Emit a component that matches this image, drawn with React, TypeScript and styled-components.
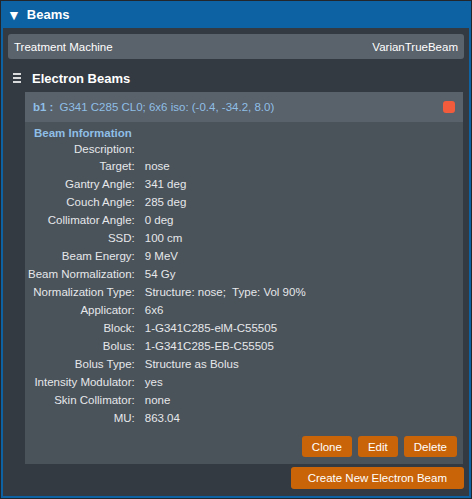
import { FC, Fragment } from 'react';
import styled, { createGlobalStyle } from 'styled-components';

const GlobalStyle = createGlobalStyle`
  body {
    margin: 0;
    background: #23272c;
    font-family: 'Liberation Sans', Arial, sans-serif;
    font-size: 11.5px;
  }
`;

const Panel = styled.div`
  box-sizing: border-box;
  width: 472px;
  height: 499px;
  border: 1px solid #23272c;
  display: flex;
  flex-direction: column;
`;

const PanelHeader = styled.div`
  display: flex;
  align-items: center;
  gap: 6px;
  height: 27px;
  padding-left: 6px;
  background-color: #0d62a3;
  color: #fff;
  font-size: 13px;
  font-weight: bold;
`;

const Caret = styled.span`
  font-size: 14px;
  line-height: 1;
`;

const PanelBody = styled.div`
  flex: 1;
  display: flex;
  flex-direction: column;
  background-color: #343a42;
  border: 2px solid #0d62a3;
  border-top: none;
  padding: 6px 5px 5px 5px;
`;

const MachineRow = styled.div`
  display: flex;
  justify-content: space-between;
  align-items: center;
  height: 25px;
  padding: 0 6px;
  border-radius: 3px;
  background-color: #5a626b;
  color: #fff;
`;

const SectionTitle = styled.div`
  display: flex;
  align-items: center;
  gap: 11px;
  height: 28px;
  padding: 5px 0 0 5px;
  color: #fff;
  font-size: 13px;
  font-weight: bold;
`;

const ListIcon = styled.span`
  display: flex;
  flex-direction: column;
  gap: 2px;
  width: 8px;

  i {
    display: block;
    height: 2px;
    background: #d8dadc;
  }
`;

const BeamCard = styled.div`
  margin-left: 17px;
  margin-right: 1px;
  display: flex;
  flex-direction: column;
`;

const CardHeader = styled.div`
  display: flex;
  align-items: center;
  justify-content: space-between;
  height: 30px;
  padding: 0 8px;
  background-color: #59616a;
  color: #8fbfe6;
`;

const BeamId = styled.span`
  font-weight: bold;
  margin-right: 6px;
`;

const StatusDot = styled.span`
  width: 12px;
  height: 12px;
  border-radius: 3px;
  background-color: #f25c3c;
`;

const CardBody = styled.div`
  background-color: #4a525a;
  padding: 3px 6px 7px 3px;
  display: flex;
  flex-direction: column;
`;

const InfoHeading = styled.div`
  margin-left: 6px;
  line-height: 16px;
  color: #8fbfe6;
  font-weight: bold;
`;

const InfoGrid = styled.div`
  display: grid;
  grid-template-columns: auto 1fr;
  column-gap: 10px;
  color: #e6e8ea;
`;

const Label = styled.div<{ $short?: boolean }>`
  text-align: right;
  line-height: ${(p) => (p.$short ? '16px' : '18px')};
  white-space: nowrap;
`;

const Value = styled.div<{ $short?: boolean }>`
  line-height: ${(p) => (p.$short ? '16px' : '18px')};
  white-space: pre;
`;

const ButtonRow = styled.div`
  display: flex;
  justify-content: flex-end;
  gap: 6px;
  margin-top: 9px;
`;

const ActionButton = styled.button<{ $wide?: boolean }>`
  font-family: inherit;
  font-size: 11.5px;
  color: #fff;
  background-color: #c96409;
  border: none;
  border-radius: 3px;
  height: ${(p) => (p.$wide ? '22px' : '21px')};
  padding: 0 ${(p) => (p.$wide ? '17px' : '10px')};
  cursor: pointer;
`;

const Footer = styled.div`
  display: flex;
  justify-content: flex-end;
  margin-top: 3px;
`;

const beamInfo: [string, string][] = [
  ['Description:', ''],
  ['Target:', 'nose'],
  ['Gantry Angle:', '341 deg'],
  ['Couch Angle:', '285 deg'],
  ['Collimator Angle:', '0 deg'],
  ['SSD:', '100 cm'],
  ['Beam Energy:', '9 MeV'],
  ['Beam Normalization:', '54 Gy'],
  ['Normalization Type:', 'Structure: nose;  Type: Vol 90%'],
  ['Applicator:', '6x6'],
  ['Block:', '1-G341C285-elM-C55505'],
  ['Bolus:', '1-G341C285-EB-C55505'],
  ['Bolus Type:', 'Structure as Bolus'],
  ['Intensity Modulator:', 'yes'],
  ['Skin Collimator:', 'none'],
  ['MU:', '863.04'],
];

const App: FC = () => (
  <>
    <GlobalStyle />
    <Panel>
      <PanelHeader>
        <Caret>▼</Caret>
        Beams
      </PanelHeader>
      <PanelBody>
        <MachineRow>
          <span>Treatment Machine</span>
          <span>VarianTrueBeam</span>
        </MachineRow>
        <SectionTitle>
          <ListIcon>
            <i />
            <i />
            <i />
          </ListIcon>
          Electron Beams
        </SectionTitle>
        <BeamCard>
          <CardHeader>
            <span>
              <BeamId>b1 :</BeamId>
              G341 C285 CL0; 6x6 iso: (-0.4, -34.2, 8.0)
            </span>
            <StatusDot />
          </CardHeader>
          <CardBody>
            <InfoHeading>Beam Information</InfoHeading>
            <InfoGrid>
              {beamInfo.map(([label, value]) => (
                <Fragment key={label}>
                  <Label $short={!value}>{label}</Label>
                  <Value $short={!value}>{value}</Value>
                </Fragment>
              ))}
            </InfoGrid>
            <ButtonRow>
              <ActionButton>Clone</ActionButton>
              <ActionButton>Edit</ActionButton>
              <ActionButton>Delete</ActionButton>
            </ButtonRow>
          </CardBody>
        </BeamCard>
        <Footer>
          <ActionButton $wide>Create New Electron Beam</ActionButton>
        </Footer>
      </PanelBody>
    </Panel>
  </>
);

export default App;
